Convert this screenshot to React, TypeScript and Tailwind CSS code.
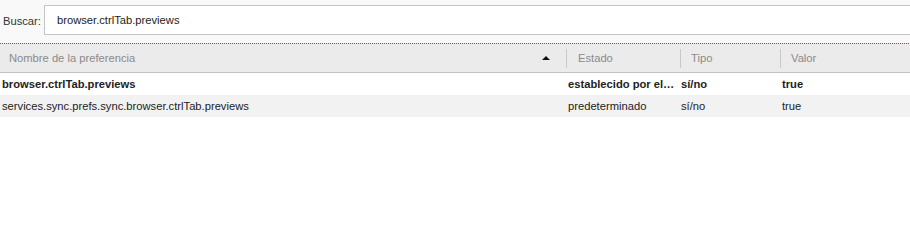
const rows = [
  { name: "browser.ctrlTab.previews", status: "establecido por el…", type: "sí/no", value: "true", bold: true },
  { name: "services.sync.prefs.sync.browser.ctrlTab.previews", status: "predeterminado", type: "sí/no", value: "true", bold: false },
]

const cols = "grid grid-cols-[566px_114px_100px_1fr]"

function Sep() {
  return <div className="h-[19px] w-px bg-[#c8c8c8]" />
}

export default function App() {
  return (
    <div className="h-[241px] w-[910px] overflow-hidden bg-white font-['Liberation_Sans',Arial,sans-serif] text-[11.2px] text-[#222]">
      {/* search bar */}
      <div className="flex h-[43px] items-start bg-[#f9f9f9] pl-[3px] pt-[5px]">
        <label className="mt-[8px] w-[41px] text-[#333]">Buscar:</label>
        <div className="flex h-[30px] flex-1 items-center border border-r-0 border-[#c4c4c4] bg-white pl-[12px] text-[#222]">
          browser.ctrlTab.previews
        </div>
      </div>
      {/* focus ring under the search bar */}
      <div className="h-px bg-[repeating-linear-gradient(90deg,#0a84d6_0px,#0a84d6_1px,#f9f9f9_1px,#f9f9f9_2px)]" />

      {/* header */}
      <div className={`${cols} h-[29px] border-b border-[#c4c4c4] bg-[#ebebeb] text-[#8a8a8a]`}>
        <div className="flex items-center justify-between pl-[9px] pr-[16px]">
          <span>Nombre de la preferencia</span>
          <svg width="8" height="4" viewBox="0 0 8 4" className="mb-px">
            <path d="M0 4 L4 0 L8 4 Z" fill="#111" />
          </svg>
        </div>
        <div className="flex items-center gap-[11px]">
          <Sep />
          <span>Estado</span>
        </div>
        <div className="flex items-center gap-[10px]">
          <Sep />
          <span>Tipo</span>
        </div>
        <div className="flex items-center gap-[10px]">
          <Sep />
          <span>Valor</span>
        </div>
      </div>

      {/* rows */}
      {rows.map((r, i) => (
        <div
          key={r.name}
          className={`${cols} h-[22px] items-center ${i % 2 ? "bg-[#f2f2f2]" : "bg-white"} ${r.bold ? "font-bold" : ""}`}
        >
          <div className="truncate pl-[2px]">{r.name}</div>
          <div className="whitespace-nowrap pl-[2px]">{r.status}</div>
          <div className="truncate pl-[1px]">{r.type}</div>
          <div className="truncate pl-[2px]">{r.value}</div>
        </div>
      ))}
    </div>
  )
}
